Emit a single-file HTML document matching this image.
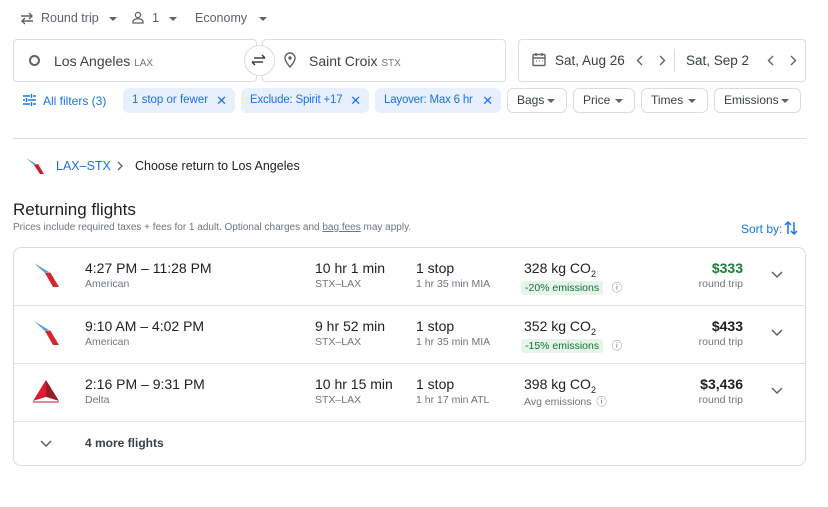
<!DOCTYPE html>
<html><head><style>
*{margin:0;padding:0;box-sizing:border-box}
body{width:828px;height:507px;background:#fff;font-family:"Liberation Sans",Arial,sans-serif;color:#202124;position:relative;overflow:hidden}
.a{position:absolute;white-space:nowrap}
.g{color:#5f6368}
.box{position:absolute;border:1px solid #dadce0;border-radius:4px;background:#fff}
.chip{position:absolute;top:88px;height:25px;border-radius:6px;background:#e8f0fe;color:#1a73e8;font-size:11.5px;line-height:25px;padding-left:9px;white-space:nowrap}
.chip2{position:absolute;top:88px;height:25px;border-radius:6px;border:1px solid #dadce0;color:#3c4043;font-size:12px;line-height:23px;padding-left:9px}
.x{position:absolute;right:8px;top:0;font-size:13px}
.tri{display:inline-block;width:0;height:0;border-left:4px solid transparent;border-right:4px solid transparent;border-top:4px solid #5f6368;vertical-align:middle;margin-left:8px}
.chip2 .tri{position:absolute;right:11px;top:10px;margin:0}
.row{position:absolute;left:14px;width:791px;border-top:1px solid #e0e0e0}
.t{font-size:14px}
.s{font-size:10.5px;color:#70757a}
.badge{background:#e6f4ea;color:#137333;font-size:10.5px;padding:1px 4px;border-radius:3px}
</style></head><body>
<svg class="a" style="left:20px;top:12px" width="14" height="13" viewBox="0 0 14 13"><path d="M1 4h11M9 1l3 3-3 3M13 9H2M5 6l-3 3 3 3" stroke="#5f6368" stroke-width="1.4" fill="none"/></svg>
<div class="a g" style="left:41px;top:11px;font-size:12.5px">Round trip<span class="tri" style="margin-left:10px"></span></div>
<svg class="a" style="left:132px;top:11px" width="12" height="13" viewBox="0 0 12 13"><circle cx="6" cy="4" r="2.6" stroke="#5f6368" stroke-width="1.3" fill="none"/><path d="M1 12v-1.5c0-1.8 3-2.8 5-2.8s5 1 5 2.8V12z" stroke="#5f6368" stroke-width="1.3" fill="none"/></svg>
<div class="a g" style="left:152px;top:11px;font-size:12.5px">1<span class="tri" style="margin-left:10px"></span></div>
<div class="a g" style="left:195px;top:11px;font-size:12.5px">Economy<span class="tri" style="margin-left:12px"></span></div>
<div class="box" style="left:13px;top:39px;width:244px;height:43px"></div>
<div class="box" style="left:262px;top:39px;width:244px;height:43px"></div>
<div class="a" style="left:244px;top:45px;width:31px;height:31px;border-radius:50%;background:#fff;border:1px solid #dadce0"></div>
<svg class="a" style="left:251px;top:53px" width="16" height="14" viewBox="0 0 16 14"><path d="M3 5h11M11 2l3 3M1 9h11M4 12L1 9" stroke="#3c4043" stroke-width="1.5" fill="none"/></svg>
<div class="a" style="left:29px;top:55px;width:11px;height:11px;border:2px solid #5f6368;border-radius:50%"></div>
<div class="a" style="left:54px;top:53px;font-size:14px;color:#3c4043">Los Angeles <span style="font-size:10px;color:#70757a">LAX</span></div>
<svg class="a" style="left:284px;top:52px" width="12" height="16" viewBox="0 0 12 16"><path d="M6 1a5 5 0 0 0-5 5c0 3.5 5 9 5 9s5-5.5 5-9a5 5 0 0 0-5-5z" stroke="#5f6368" stroke-width="1.4" fill="none"/><circle cx="6" cy="6" r="1.7" fill="#5f6368"/></svg>
<div class="a" style="left:309px;top:53px;font-size:14px;color:#3c4043">Saint Croix <span style="font-size:10px;color:#70757a">STX</span></div>
<div class="box" style="left:518px;top:39px;width:288px;height:43px"></div>
<svg class="a" style="left:532px;top:52px" width="14" height="15" viewBox="0 0 14 15"><rect x="1" y="2.5" width="12" height="11" rx="1" stroke="#5f6368" stroke-width="1.4" fill="none"/><path d="M1 6h12M4 1v3M10 1v3" stroke="#5f6368" stroke-width="1.4"/><path d="M4 9h1M7 9h1M10 9h1" stroke="#5f6368"/></svg>
<div class="a" style="left:555px;top:53px;font-size:13.5px;color:#3c4043">Sat, Aug 26</div>
<svg class="a" style="left:636px;top:55px" width="7" height="11" viewBox="0 0 7 11"><path d="M6 1L1.5 5.5 6 10" stroke="#5f6368" stroke-width="1.4" fill="none"/></svg>
<svg class="a" style="left:659px;top:55px" width="7" height="11" viewBox="0 0 7 11"><path d="M1 1l4.5 4.5L1 10" stroke="#5f6368" stroke-width="1.4" fill="none"/></svg>
<div class="a" style="left:674px;top:49px;width:1px;height:23px;background:#dadce0"></div>
<div class="a" style="left:686px;top:53px;font-size:13.5px;color:#3c4043">Sat, Sep 2</div>
<svg class="a" style="left:767px;top:55px" width="7" height="11" viewBox="0 0 7 11"><path d="M6 1L1.5 5.5 6 10" stroke="#5f6368" stroke-width="1.4" fill="none"/></svg>
<svg class="a" style="left:790px;top:55px" width="7" height="11" viewBox="0 0 7 11"><path d="M1 1l4.5 4.5L1 10" stroke="#5f6368" stroke-width="1.4" fill="none"/></svg>
<svg class="a" style="left:23px;top:94px" width="13" height="12" viewBox="0 0 13 12"><path d="M0 2h7M10 2h3M0 6h2M5 6h8M0 10h7M10 10h3M8.5 0v4M3.5 4v4M8.5 8v4" stroke="#1a73e8" stroke-width="1.4"/></svg>
<div class="a" style="left:43px;top:94px;font-size:12px;color:#1a73e8">All filters (3)</div>
<div class="chip" style="left:123px;width:112px">1 stop or fewer<span class="x">✕</span></div>
<div class="chip" style="left:241px;width:128px;letter-spacing:-0.2px">Exclude: Spirit +17<span class="x">✕</span></div>
<div class="chip" style="left:375px;width:126px;letter-spacing:-0.2px">Layover: Max 6 hr<span class="x">✕</span></div>
<div class="chip2" style="left:507px;width:60px">Bags<span class="tri"></span></div>
<div class="chip2" style="left:573px;width:62px">Price<span class="tri"></span></div>
<div class="chip2" style="left:641px;width:67px">Times<span class="tri"></span></div>
<div class="chip2" style="left:714px;width:87px">Emissions<span class="tri"></span></div>
<div class="a" style="left:13px;top:138px;width:793px;height:1px;background:#dadce0"></div>
<svg class="a" style="left:25px;top:157px" width="20" height="18" viewBox="0 0 20 18"><path d="M1 1l8 7 2-1z" fill="#5aa0d8"/><path d="M9 8l6 9h4l-6-10z" fill="#c8202a"/><path d="M9 8l2-1 2 0z" fill="#aab"/></svg>
<div class="a" style="left:56px;top:159px;font-size:12.5px;color:#1a73e8">LAX–STX</div>
<svg class="a" style="left:117px;top:161px" width="6" height="10" viewBox="0 0 6 10"><path d="M1 1l4 4-4 4" stroke="#5f6368" stroke-width="1.3" fill="none"/></svg>
<div class="a" style="left:135px;top:159px;font-size:12.5px">Choose return to Los Angeles</div>
<div class="a" style="left:13px;top:200px;font-size:17px">Returning flights</div>
<div class="a" style="left:13px;top:222px;font-size:10px;color:#70757a">Prices include required taxes + fees for 1 adult. Optional charges and <u>bag fees</u> may apply.</div>
<div class="a" style="left:741px;top:222px;font-size:12px;color:#1a73e8">Sort by:</div>
<svg class="a" style="left:784px;top:220px" width="14" height="16" viewBox="0 0 14 16"><path d="M4 14V2M1 5l3-3 3 3M10 2v12M7 11l3 3 3-3" stroke="#1a73e8" stroke-width="1.5" fill="none"/></svg>
<div class="box" style="left:13px;top:247px;width:793px;height:219px;border-radius:8px"></div>
<div class="row" style="top:305px"></div>
<div class="row" style="top:363px"></div>
<div class="row" style="top:421px"></div>
<svg class="a" style="left:33px;top:262px" width="27" height="26" viewBox="0 0 27 26"><path d="M1 1l12 11 3-2z" fill="#5aa0d8"/><path d="M12 11l8 14h6l-9-15z" fill="#d3262d"/><path d="M12 11l4-1 2 1z" fill="#bbc"/></svg>
<div class="a t" style="left:85px;top:260px">4:27 PM – 11:28 PM</div>
<div class="a s" style="left:85px;top:278px">American</div>
<div class="a t" style="left:315px;top:260px">10 hr 1 min</div>
<div class="a s" style="left:315px;top:278px">STX–LAX</div>
<div class="a t" style="left:416px;top:260px">1 stop</div>
<div class="a s" style="left:416px;top:278px">1 hr 35 min MIA</div>
<div class="a t" style="left:524px;top:260px">328 kg CO<sub style="font-size:9px">2</sub></div>
<div class="a" style="left:521px;top:278px"><span class="badge">-20% emissions</span> <span class="s" style="margin-left:4px">ⓘ</span></div>
<div class="a t" style="right:85px;top:260px;color:#188038;font-weight:bold">$333</div>
<div class="a s" style="right:85px;top:278px">round trip</div>
<svg class="a" style="left:771px;top:271px" width="12" height="8" viewBox="0 0 12 8"><path d="M1 1l5 5 5-5" stroke="#5f6368" stroke-width="1.5" fill="none"/></svg>
<svg class="a" style="left:33px;top:320px" width="27" height="26" viewBox="0 0 27 26"><path d="M1 1l12 11 3-2z" fill="#5aa0d8"/><path d="M12 11l8 14h6l-9-15z" fill="#d3262d"/><path d="M12 11l4-1 2 1z" fill="#bbc"/></svg>
<div class="a t" style="left:85px;top:318px">9:10 AM – 4:02 PM</div>
<div class="a s" style="left:85px;top:336px">American</div>
<div class="a t" style="left:315px;top:318px">9 hr 52 min</div>
<div class="a s" style="left:315px;top:336px">STX–LAX</div>
<div class="a t" style="left:416px;top:318px">1 stop</div>
<div class="a s" style="left:416px;top:336px">1 hr 35 min MIA</div>
<div class="a t" style="left:524px;top:318px">352 kg CO<sub style="font-size:9px">2</sub></div>
<div class="a" style="left:521px;top:336px"><span class="badge">-15% emissions</span> <span class="s" style="margin-left:4px">ⓘ</span></div>
<div class="a t" style="right:85px;top:318px;font-weight:bold">$433</div>
<div class="a s" style="right:85px;top:336px">round trip</div>
<svg class="a" style="left:771px;top:329px" width="12" height="8" viewBox="0 0 12 8"><path d="M1 1l5 5 5-5" stroke="#5f6368" stroke-width="1.5" fill="none"/></svg>
<svg class="a" style="left:32px;top:379px" width="28" height="24" viewBox="0 0 28 24"><path d="M14 1L1 22l13-4z" fill="#e01933"/><path d="M14 1l13 21-13-4z" fill="#9b1b2a"/><path d="M1 22l13-4 13 4z" fill="#fff" opacity=".9"/><path d="M1 23h26" stroke="#c01830"/></svg>
<div class="a t" style="left:85px;top:376px">2:16 PM – 9:31 PM</div>
<div class="a s" style="left:85px;top:394px">Delta</div>
<div class="a t" style="left:315px;top:376px">10 hr 15 min</div>
<div class="a s" style="left:315px;top:394px">STX–LAX</div>
<div class="a t" style="left:416px;top:376px">1 stop</div>
<div class="a s" style="left:416px;top:394px">1 hr 17 min ATL</div>
<div class="a t" style="left:524px;top:376px">398 kg CO<sub style="font-size:9px">2</sub></div>
<div class="a s" style="left:524px;top:394px">Avg emissions <span style="margin-left:2px">ⓘ</span></div>
<div class="a t" style="right:85px;top:376px;font-weight:bold">$3,436</div>
<div class="a s" style="right:85px;top:394px">round trip</div>
<svg class="a" style="left:771px;top:387px" width="12" height="8" viewBox="0 0 12 8"><path d="M1 1l5 5 5-5" stroke="#5f6368" stroke-width="1.5" fill="none"/></svg>
<svg class="a" style="left:40px;top:440px" width="12" height="8" viewBox="0 0 12 8"><path d="M1 1l5 5 5-5" stroke="#5f6368" stroke-width="1.5" fill="none"/></svg>
<div class="a" style="left:85px;top:436px;font-size:12px;font-weight:bold;color:#3c4043">4 more flights</div>
</body></html>
